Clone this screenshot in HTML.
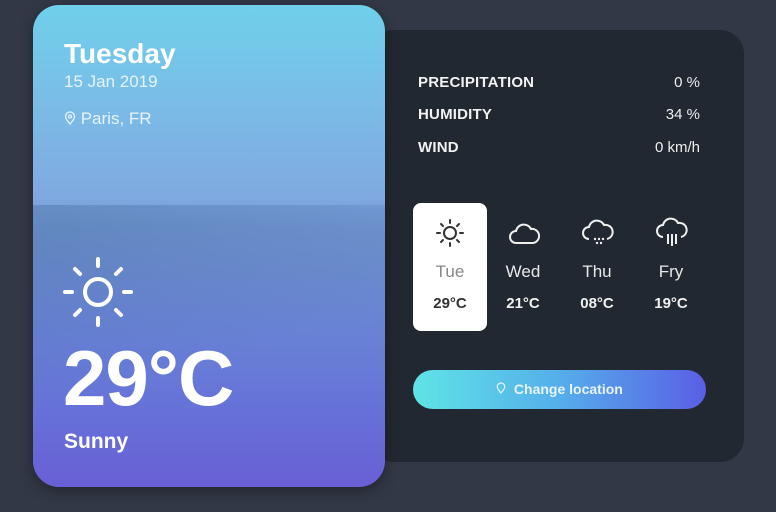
<!DOCTYPE html>
<html><head><style>
*{margin:0;padding:0;box-sizing:border-box}
body{width:776px;height:512px;overflow:hidden;background:#323846;font-family:"Liberation Sans",sans-serif;position:relative;color:#fff}
.dark{position:absolute;left:370px;top:30px;width:374px;height:432px;background:#222831;border-radius:24px}
.card{position:absolute;left:33px;top:5px;width:352px;height:482px;border-radius:26px;overflow:hidden;
background:linear-gradient(180deg,#6fd0ea 0%,#7cb8e6 25%,#7fa9e0 40%,#7298d0 46%,#6c8dcf 55%,#6880d6 70%,#6670d8 85%,#6a5fd6 100%);box-shadow:0 4px 14px rgba(0,0,0,.35)}
.sea{position:absolute;left:0;top:200px;width:352px;height:282px;background:linear-gradient(165deg,rgba(60,100,150,.35) 0%,rgba(70,100,170,.2) 25%,rgba(90,110,200,0) 55%)}
.t{position:absolute;white-space:nowrap}
.lbl{font-weight:bold;font-size:15px;color:#f2f2f2;letter-spacing:.2px}
.val{font-size:15px;color:#eee}
.days{position:absolute;left:413px;top:203px}
.day{position:absolute;width:74px;height:128px;text-align:center}
.day svg{position:absolute;left:21px;top:14px}
.dn{position:absolute;top:59px;width:100%;font-size:17px;color:#e8e8e8}
.dt{position:absolute;top:92px;width:100%;font-size:15px;font-weight:bold;color:#f0f0f0}
.btn{position:absolute;left:413px;top:370px;width:293px;height:39px;border-radius:20px;background:linear-gradient(90deg,#5fe4e6,#55aeea 50%,#5a5ee6);font-weight:bold;font-size:14px;text-align:center;line-height:39px;color:#e8f4ff}
</style></head><body>
<div class="dark"></div>
<div class="card"><div class="sea"></div>
<div class="t" style="left:31px;top:33px;font-size:28px;font-weight:bold">Tuesday</div>
<div class="t" style="left:31px;top:67px;font-size:17px;color:#e6f4fa">15 Jan 2019</div>
<div class="t" style="left:31px;top:104px;font-size:17px;color:#e6f4fa">
<svg width="12" height="14" viewBox="0 0 12 14" style="vertical-align:-1px"><path d="M6 13C2 8.5 1.5 7 1.5 5.5a4.5 4.5 0 019 0c0 1.5-.5 3-4.5 7.5z" fill="none" stroke="#e6f4fa" stroke-width="1.3"/><circle cx="6" cy="5.5" r="1.5" fill="none" stroke="#e6f4fa" stroke-width="1.2"/></svg> Paris, FR</div>
<svg class="t" style="left:28px;top:248px" width="78" height="78" viewBox="0 0 78 78"><g stroke="#fff" stroke-width="4" stroke-linecap="round" fill="none"><circle cx="37" cy="39" r="13"/><path d="M37 6v7M37 65v7M4 39h7M63 39h7M14 16l5 5M55 57l5 5M60 16l-5 5M19 57l-5 5"/></g></svg>
<div class="t" style="left:30px;top:328px;font-size:78px;font-weight:bold;letter-spacing:-1px">29°C</div>
<div class="t" style="left:31px;top:425px;font-size:21px;font-weight:bold">Sunny</div>
</div>
<div class="t lbl" style="left:418px;top:74px">PRECIPITATION</div>
<div class="t lbl" style="left:418px;top:106px">HUMIDITY</div>
<div class="t lbl" style="left:418px;top:139px">WIND</div>
<div class="t val" style="right:76px;top:74px">0 %</div>
<div class="t val" style="right:76px;top:106px">34 %</div>
<div class="t val" style="right:76px;top:139px">0 km/h</div>
<div class="days">
<div class="day" style="left:0;background:#fff;border-radius:8px">
<svg width="32" height="32" viewBox="0 0 32 32"><g stroke="#333" stroke-width="2" stroke-linecap="round" fill="none"><circle cx="16" cy="16" r="6"/><path d="M16 3v3M16 26v3M3 16h3M26 16h3M7 7l2 2M23 23l2 2M25 7l-2 2M9 23l-2 2"/></g></svg>
<div class="dn" style="color:#888">Tue</div><div class="dt" style="color:#333">29°C</div></div>
<div class="day" style="left:73px"><svg width="34" height="32" viewBox="0 0 34 32"><path d="M9 26a6 6 0 010-12 8 8 0 0115-2 6 6 0 012 14z" fill="none" stroke="#eee" stroke-width="2"/></svg><div class="dn">Wed</div><div class="dt">21°C</div></div>
<div class="day" style="left:147px"><svg width="34" height="32" viewBox="0 0 34 32"><path d="M8 22a6 6 0 010-12 8 8 0 0115-2 6 6 0 013 14" fill="none" stroke="#eee" stroke-width="2"/><g fill="#eee"><circle cx="14" cy="22" r="1.2"/><circle cx="18" cy="22" r="1.2"/><circle cx="22" cy="22" r="1.2"/><circle cx="16" cy="26" r="1.2"/><circle cx="20" cy="26" r="1.2"/></g></svg><div class="dn">Thu</div><div class="dt">08°C</div></div>
<div class="day" style="left:221px"><svg width="34" height="34" viewBox="0 0 34 34"><path d="M8 20a6 6 0 010-12 8 8 0 0115-2 6 6 0 013 14" fill="none" stroke="#eee" stroke-width="2"/><path d="M13 17v10M17 17v12M21 17v10" stroke="#eee" stroke-width="2"/></svg><div class="dn">Fry</div><div class="dt">19°C</div></div>
</div>
<div class="btn"><svg width="10" height="12" viewBox="0 0 12 14" style="vertical-align:0"><path d="M6 13C2 8.5 1.5 7 1.5 5.5a4.5 4.5 0 019 0c0 1.5-.5 3-4.5 7.5z" fill="none" stroke="#e8f4ff" stroke-width="1.4"/></svg>&nbsp; Change location</div>
</body></html>
